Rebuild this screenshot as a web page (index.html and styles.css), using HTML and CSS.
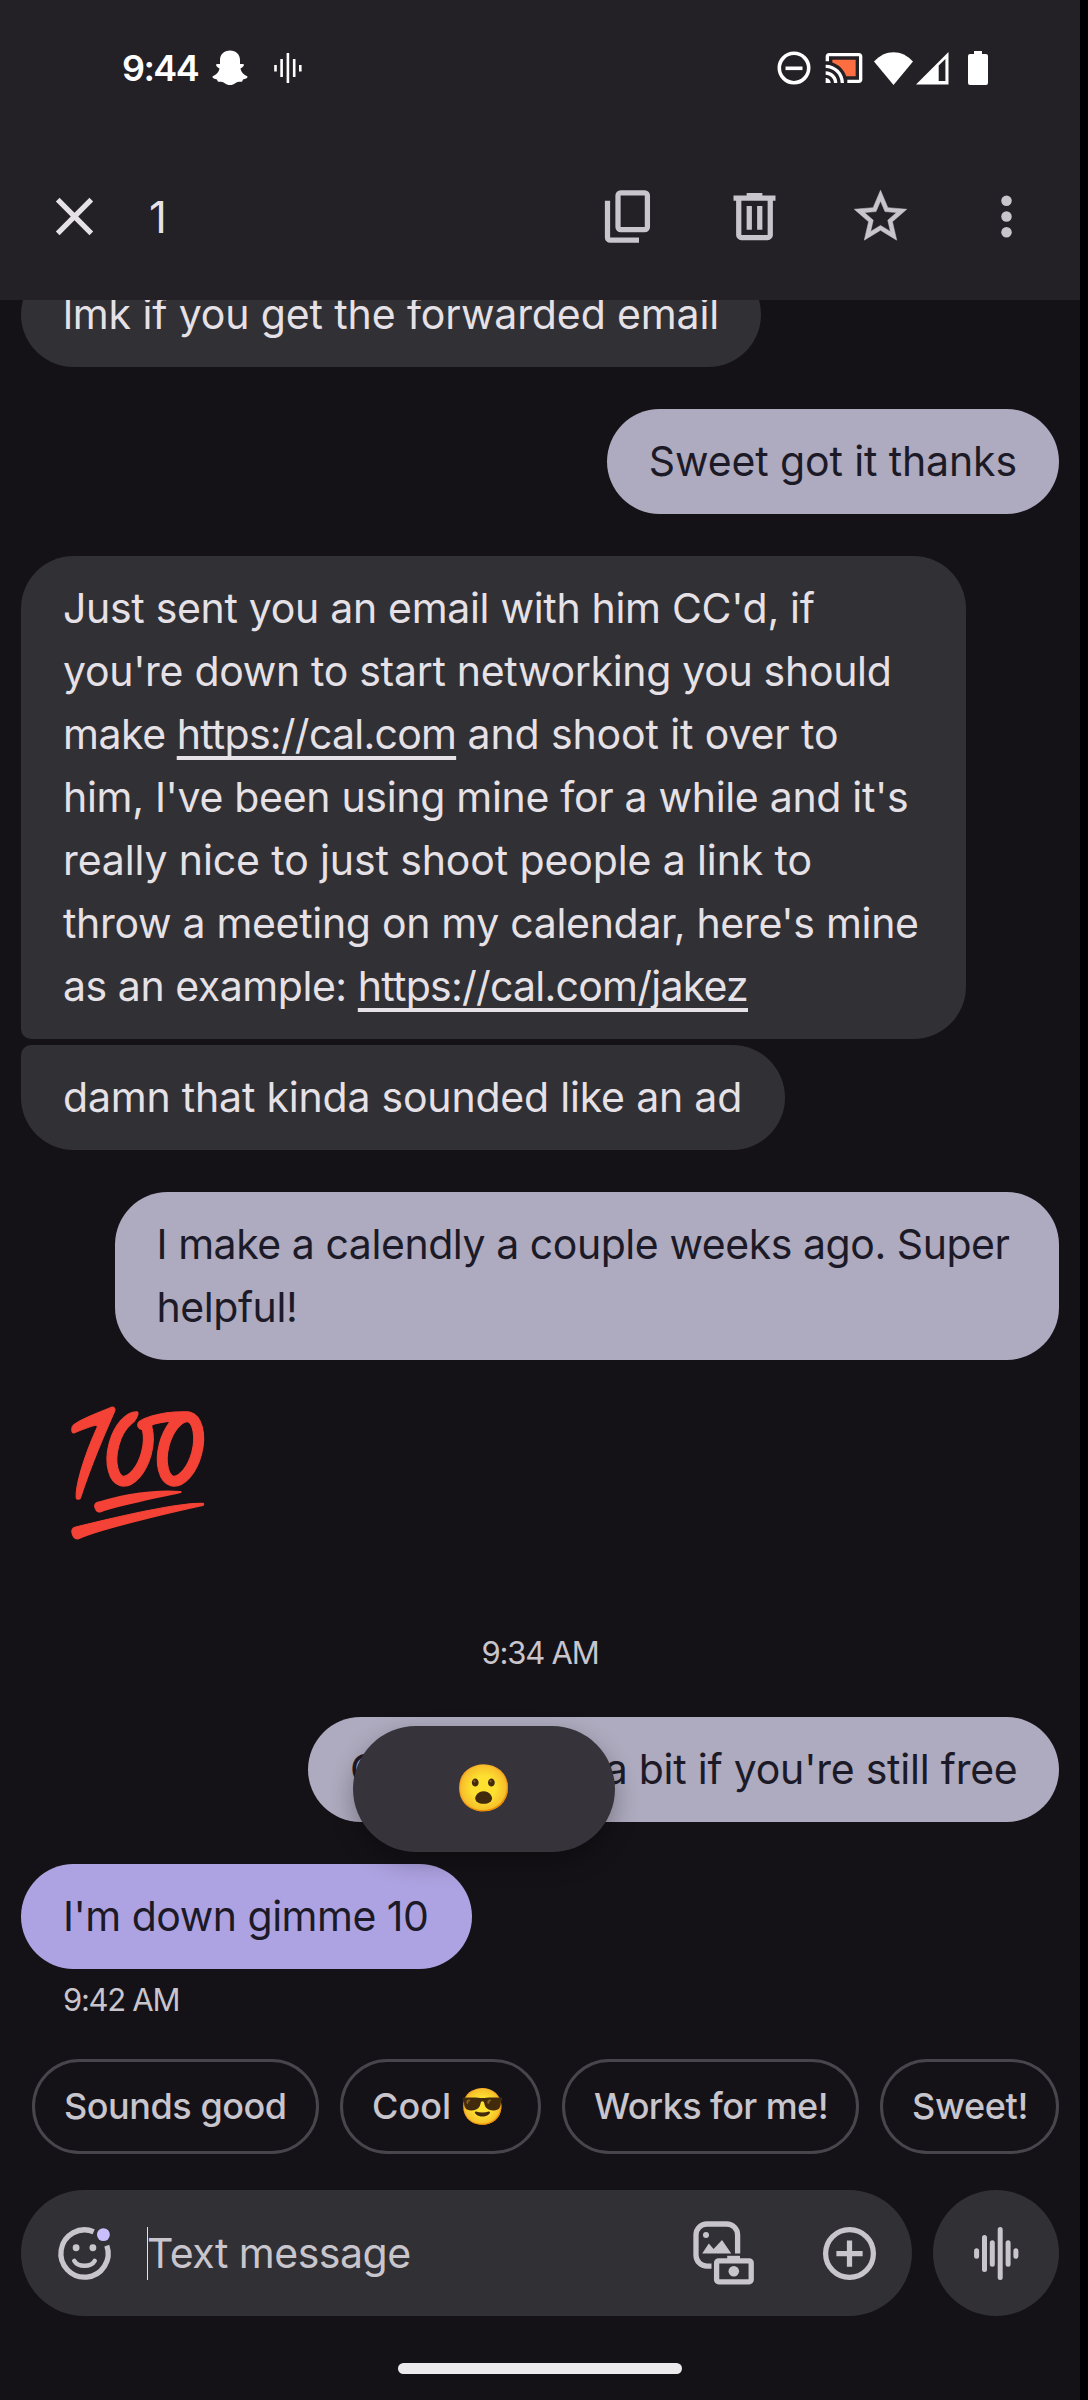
FILE: index.html
```html
<!DOCTYPE html>
<html lang="en">
<head>
<meta charset="utf-8">
<title>Messages</title>
<link rel="stylesheet" href="styles.css">
</head>
<body>
<div class="phone">
  <header class="status-bar">
    <span class="clock">9:44</span>
    <svg class="ghost" width="36" height="36" viewBox="0 0 36 36"><path fill="#fff" d="M18 .5C12 .5 8 4.500 8 10v4c-1.500 0-3.500-.5-4 .5-.4 1.500 2 3 3.500 4C7 22 4 25 .5 26.500 0 28 3 29 5 29.500c.5 1 .5 2 1.500 2.200 2 0 4-.2 5.500 1 2 1.600 4 2.300 6 2.300s4-.7 6-2.300c1.500-1.200 3.500-1 5.500-1 1-.2 1-1.200 1.500-2.200 2-.5 5-1.500 4.500-3C32 25 29 22 28.500 18.500c1.500-1 3.900-2.500 3.500-4-.5-1-2.500-.5-4-.5v-4C28 4.500 24 .5 18 .5z"/></svg>
    <svg class="wave-small" width="28" height="30" viewBox="0 0 28 30"><path stroke="#fff" stroke-width="2.600" d="M1.500 12v6.500M7.600 6v18M13.900 0v30M20.200 6v18M26.300 12v6.500"/></svg>
    <span class="spacer"></span>
    <svg class="dnd" width="34" height="34" viewBox="0 0 34 34"><circle cx="17" cy="17" r="14.700" fill="none" stroke="#fff" stroke-width="3.600"/><path stroke="#fff" stroke-width="3.600" d="M8.500 17.300h17"/></svg>
    <svg class="cast" width="40" height="40" viewBox="0 0 24 24"><path fill="#ff6e40" d="M19 7H5v1.630c3.960 1.280 7.090 4.410 8.370 8.370H19z"/><path fill="#fff" d="M1 18v3h3c0-1.660-1.340-3-3-3zm0-4v2c2.760 0 5 2.240 5 5h2c0-3.870-3.130-7-7-7zM1 10v2c4.970 0 9 4.030 9 9h2c0-6.080-4.930-11-11-11zM21 3H3c-1.100 0-2 .9-2 2v3h2V5h18v14h-7v2h7c1.100 0 2-.9 2-2V5c0-1.100-.9-2-2-2z"/></svg>
    <svg class="wifi" width="39" height="33" viewBox="0 0 39 33"><path fill="#fff" d="M0 9.500C11-3 28-3 39 9.500L19.500 33z"/></svg>
    <svg class="signal" width="33" height="33" viewBox="0 0 33 33"><path fill="#fff" fill-rule="evenodd" d="M32.500 0v32.500H0zM22.700 13.500V29h6.700V7z"/></svg>
    <svg class="battery" width="20" height="34" viewBox="0 0 20 34"><path fill="#fff" d="M6 0h8v3h4a2 2 0 0 1 2 2v27a2 2 0 0 1-2 2H2a2 2 0 0 1-2-2V5a2 2 0 0 1 2-2h4z"/></svg>
  </header>

  <div class="selection-bar">
    <svg class="icon" viewBox="0 0 24 24"><path stroke="#e5e1e6" stroke-width="2" d="M5.600 5.600l12.800 12.800M18.400 5.600L5.600 18.400"/></svg>
    <span class="count">1</span>
    <span class="spacer"></span>
    <div class="actions">
      <svg class="icon" viewBox="0 0 24 24"><g fill="none" stroke="#c8c5cd" stroke-width="2"><rect x="8" y="3" width="11.200" height="14" rx="1"/><path d="M4 6v14a1 1 0 0 0 1 1h11"/></g></svg>
      <svg class="icon" viewBox="0 0 24 24"><path fill="none" stroke="#c8c5cd" stroke-width="2" d="M6 5v14a1 1 0 0 0 1 1h10a1 1 0 0 0 1-1V5M4 5h16M9 4h6M10 8v9M14 8v9"/></svg>
      <svg class="icon" viewBox="0 0 24 24"><path fill="#c8c5cd" stroke="#c8c5cd" stroke-width=".2" d="M22 9.240l-7.190-.62L12 2 9.190 8.630 2 9.240l5.460 4.730L5.820 21 12 17.270 18.180 21l-1.630-7.030L22 9.240zM12 15.400l-3.760 2.270 1-4.280-3.320-2.880 4.380-.38L12 6.100l1.710 4.040 4.380.38-3.320 2.880 1 4.280L12 15.400z"/></svg>
      <svg class="icon" viewBox="0 0 24 24"><g fill="#c8c5cd"><circle cx="12" cy="6" r="2"/><circle cx="12" cy="12" r="2"/><circle cx="12" cy="18" r="2"/></g></svg>
    </div>
  </div>

  <main class="thread">
    <div class="bubble received first"><span class="open">lmk if you get the forwarded email</span></div>
    <div class="bubble sent"><span class="open">Sweet got it thanks</span></div>
    <div class="bubble received group-start">
      Just sent you an email with him CC'd, if<br>
      you're down to start networking you should<br>
      <span class="snug">make </span><a class="link">https://cal.com</a><span class="open"> and shoot it over to</span><br>
      him, I've been using mine for a while and it's<br>
      <span class="open">really nice to just shoot people a link to</span><br>
      throw a meeting on my calendar, here's mine<br>
      <span class="snug">as an example: </span><a class="link">https://cal.com/jakez</a>
    </div>
    <div class="bubble received group-end">damn that kinda sounded like an ad</div>
    <div class="bubble sent wide"><span class="snug">I make a calendly a couple weeks ago. Super<br>helpful!</span></div>
    <div class="big-emoji">💯</div>
    <div class="time-divider">9:34 AM</div>
    <div class="bubble sent last"><span class="lead">Can chat in </span>a bit if you're still free</div>
    <div class="bubble received selected">I'm down gimme 10</div>
    <div class="timestamp">9:42 AM</div>
    <div class="reaction-popup">😮</div>
  </main>

  <div class="replies">
    <span class="chip">Sounds good</span>
    <span class="chip cool">Cool 😎</span>
    <span class="chip works">Works for me!</span>
    <span class="chip sweet">Sweet!</span>
  </div>

  <div class="composer">
    <div class="field">
      <svg class="icon" viewBox="0 0 24 24"><g fill="none" stroke="#c8c5cd"><path stroke-width="2" d="M15.500 3.700A9 9 0 1 0 20.500 9"/><path stroke-width="1.700" stroke-linecap="round" d="M8.100 14.800c1.500 2.500 6.300 2.500 7.800 0"/></g><circle cx="8.800" cy="9.800" r="1.300" fill="#c8c5cd"/><circle cx="15.200" cy="9.800" r="1.300" fill="#c8c5cd"/><circle cx="19.200" cy="4.800" r="2.450" fill="#c9bfff"/></svg>
      <span class="caret"></span>
      <span class="placeholder">Text message</span>
      <svg class="gallery" width="63" height="64" viewBox="0 0 63 64"><g fill="none" stroke="#c8c5cd" stroke-width="5.300"><path d="M45.600 32.500V14a11 11 0 0 0-11-11H15A11 11 0 0 0 4 14v20.200a11 11 0 0 0 11 11h4.500"/><rect x="24.600" y="39.800" width="34.600" height="21" rx="2"/></g><g fill="#c8c5cd"><circle cx="14" cy="14" r="3"/><path d="M10.200 32.500l6.600-10 4.800 5.500 8.400-9 9.300 13.500z"/><path d="M35.200 34.800H48v4H35.200z"/><circle cx="41.800" cy="50.300" r="5.300"/></g></svg>
      <svg class="icon" viewBox="0 0 24 24"><g fill="none" stroke="#c8c5cd" stroke-width="2"><circle cx="12" cy="12" r="9.100"/><path d="M7 12h10M12 7v10"/></g></svg>
    </div>
    <div class="mic"><svg width="45" height="53" viewBox="0 0 45 53"><path stroke="#c8c5cd" stroke-width="5" stroke-linecap="round" d="M2.600 23.700v5.600M10.500 10.500v32M18.300 15.700v21.600M26.200 2.500v48M34.100 15.700v21.600M41.900 23.700v5.600"/></svg></div>
  </div>
  <div class="home-bar"></div>
</div>
</body>
</html>
```
FILE: styles.css
```css
* { box-sizing: border-box; }
body {
  margin: 0;
  background: #000;
  font-family: Inter, "Liberation Sans", "Noto Color Emoji", sans-serif;
}
svg { display: block; flex: none; }
.phone {
  width: 1080px;
  height: 2400px;
  background: #151217;
  display: flex;
  flex-direction: column;
}
.spacer { flex: 1; }
.icon { width: 63px; height: 63px; }

.status-bar {
  height: 136px;
  padding: 0 92px 0 122px;
  background: #232026;
  color: #fff;
  display: flex;
  align-items: center;
}
.clock { width: 90px; font-size: 36px; font-weight: 600; letter-spacing: -1.600px; line-height: 44px; }
.wave-small { margin-left: 26px; }
.cast { margin-left: 13px; }
.wifi { margin-left: 10px; }
.signal { margin-left: 3px; }
.battery { margin-left: 19px; }

.selection-bar {
  height: 164px;
  padding: 0 42px 3px 43px;
  background: #232026;
  color: #e5e1e6;
  display: flex;
  align-items: center;
}
.count { margin-left: 43px; font-size: 44px; line-height: 56px; }
.actions { display: flex; gap: 63px; }

.thread {
  position: relative;
  height: 1759px;
  overflow: hidden;
  display: flex;
  flex-direction: column;
  align-items: flex-start;
  padding: 0 21px;
}
.bubble {
  flex: none;
  padding: 21px 42px;
  border-radius: 52.500px;
  font-size: 41px;
  line-height: 63px;
  letter-spacing: -0.310px;
  white-space: nowrap;
}
.received { background: #313034; color: #e5e1e6; }
.sent { align-self: flex-end; margin-top: 42px; background: #aeaabf; color: #1c1a27; }
.first { margin-top: -38px; }
.group-start { width: 945px; margin-top: 42px; border-bottom-left-radius: 10px; }
.group-end { width: 764px; margin-top: 6px; border-top-left-radius: 10px; letter-spacing: -0.200px; }
.wide { width: 944.500px; }
.open { letter-spacing: -0.120px; }
.snug { letter-spacing: -0.450px; }
.lead { letter-spacing: 2.050px; }
.link {
  letter-spacing: -0.750px;
  text-decoration: underline 3.500px;
  text-underline-offset: 7px;
  text-decoration-skip-ink: none;
}
.big-emoji {
  flex: none;
  height: 170px;
  margin: 40px 0 0 42px;
  font-size: 120px;
  line-height: 142px;
}
.time-divider {
  width: 100%;
  margin-top: 63px;
  color: #c8c5cd;
  font-size: 31px;
  line-height: 40px;
  letter-spacing: -1.200px;
  text-align: center;
}
.last { width: 751px; margin-top: 44px; letter-spacing: -0.230px; }
.selected { width: 451px; margin-top: 42px; background: #aea3e2; color: #1c1a27; letter-spacing: -0.500px; }
.timestamp {
  margin: 11px 0 0 42px;
  color: #c8c5cd;
  font-size: 31px;
  line-height: 40px;
  letter-spacing: -1.300px;
}
.reaction-popup {
  position: absolute;
  left: 353px;
  top: 1426px;
  width: 262px;
  height: 126px;
  padding-bottom: 4px;
  border-radius: 63px;
  background: #36333a;
  box-shadow: 0 10px 24px rgba(0, 0, 0, 0.300);
  font-size: 46px;
  display: flex;
  align-items: center;
  justify-content: center;
}

.replies {
  flex: none;
  height: 95px;
  padding-left: 32px;
  display: flex;
  gap: 21px;
}
.chip {
  flex: none;
  width: 287px;
  padding-left: 29px;
  border: 3px solid #48464c;
  border-radius: 48px;
  color: #c8c5cd;
  font-size: 36px;
  font-weight: 500;
  line-height: 88px;
  letter-spacing: -0.450px;
  white-space: pre;
}
.cool { width: 201px; letter-spacing: 0; }
.works { width: 297px; letter-spacing: -0.590px; }
.sweet { width: 179px; letter-spacing: -0.300px; }

.composer {
  flex: none;
  margin-top: 36px;
  padding: 0 21px;
  display: flex;
  gap: 21px;
}
.field {
  width: 891px;
  height: 126px;
  padding: 0 31px 0 32px;
  border-radius: 63px;
  background: #313034;
  display: flex;
  align-items: center;
}
.caret { width: 1px; height: 53px; margin-left: 31px; background: #e5e1e6; }
.placeholder { flex: 1; margin-left: -1px; color: #c8c5cd; font-size: 41px; letter-spacing: -0.500px; line-height: 63px; }
.gallery { margin-right: 63px; }
.mic {
  width: 126px;
  height: 126px;
  border-radius: 50%;
  background: #313034;
  display: flex;
  align-items: center;
  justify-content: center;
  padding-top: 1px;
}
.home-bar {
  flex: none;
  width: 284px;
  height: 11px;
  margin: 47px auto 0;
  border-radius: 6px;
  background: #eceaed;
}
```
